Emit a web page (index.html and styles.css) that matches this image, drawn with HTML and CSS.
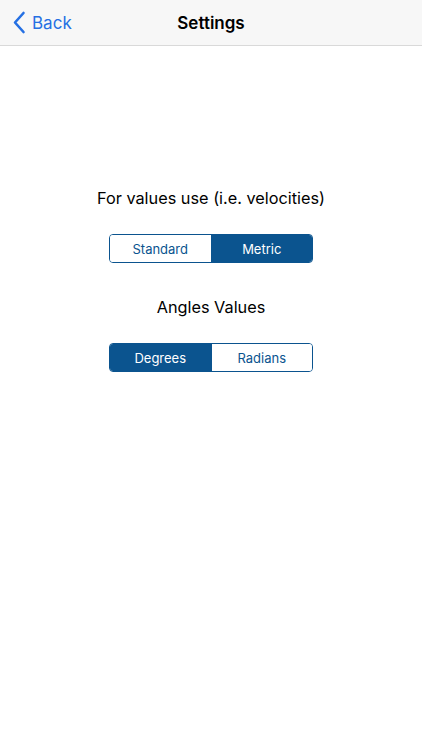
FILE: index.html
```html
<!DOCTYPE html>
<html>
<head>
<meta charset="utf-8">
<link rel="stylesheet" href="styles.css">
</head>
<body>
<header class="nav">
  <a class="back">
    <svg class="chev" width="14" height="23" viewBox="0 0 14 23"><path d="M11.5 2 L3 11.5 L11.5 21" fill="none" stroke="currentColor" stroke-width="2.6" stroke-linecap="round" stroke-linejoin="round"/></svg>
    <span>Back</span>
  </a>
  <h1 class="title">Settings</h1>
</header>
<main class="content">
  <p class="label label-first">For values use (i.e. velocities)</p>
  <div class="seg">
    <div class="seg-item">Standard</div>
    <div class="seg-item on">Metric</div>
  </div>
  <p class="label label-second">Angles Values</p>
  <div class="seg">
    <div class="seg-item on">Degrees</div>
    <div class="seg-item">Radians</div>
  </div>
</main>
</body>
</html>
```
FILE: styles.css
```css
* { box-sizing: border-box; }
html, body { margin: 0; padding: 0; background: #fff; }
body { width: 422px; height: 750px; font-family: "Inter", "Liberation Sans", sans-serif; color: #000; }
.nav {
  position: relative;
  height: 46px;
  background: #f7f7f7;
  border-bottom: 1px solid #d9d9d9;
  display: flex;
  align-items: center;
  justify-content: center;
}
.back {
  position: absolute;
  left: 12px;
  top: 0;
  height: 45px;
  display: flex;
  align-items: center;
  gap: 6px;
  color: #2570e3;
  font-size: 17px;
}
.chev { display: block; }
.title { margin: 0; font-size: 17px; font-weight: 600; }
.content { display: flex; flex-direction: column; align-items: center; }
.label { margin: 0; font-size: 16.3px; line-height: 22px; }
.label-first { margin-top: 141px; }
.label-second { margin-top: 33px; }
.seg {
  margin-top: 25px;
  width: 204px;
  height: 29px;
  display: flex;
  border: 1px solid #0b548f;
  border-radius: 4px;
  overflow: hidden;
}
.seg-item {
  flex: 1;
  display: flex;
  align-items: center;
  justify-content: center;
  font-size: 13px;
  color: #0b548f;
  background: #fff;
}
.seg-item + .seg-item { border-left: 1px solid #0b548f; }
.seg-item.on { background: #0b548f; color: #fff; }
```
